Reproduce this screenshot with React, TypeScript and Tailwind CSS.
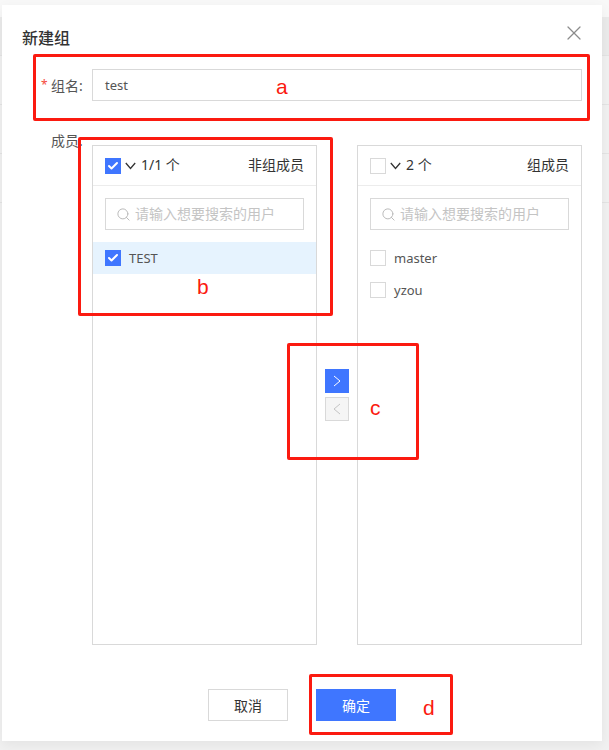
import { Check, Search, X } from "lucide-react";

const FONT = "font-['Noto_Sans','Noto_Sans_CJK_SC',sans-serif]";
const NOTE_TEXT = "absolute font-['Liberation_Sans',sans-serif] text-[21px] leading-none text-[#fb1a10]";
const NOTE_BOX = "absolute rounded-[2px] border-[3px] border-[#fb1a10]";

function Box({ checked = false }: { checked?: boolean }) {
  if (checked) {
    return (
      <span className="flex h-4 w-4 shrink-0 items-center justify-center bg-[#3f76ff]">
        <Check className="h-3 w-3 text-white" strokeWidth={4} />
      </span>
    );
  }
  return <span className="h-4 w-4 shrink-0 border border-[#d9d9d9] bg-white" />;
}

function Caret({ d, color }: { d: string; color: string }) {
  return (
    <svg width="12" height="12" viewBox="0 0 12 12" fill="none" stroke={color} strokeWidth="1">
      <path d={d} />
    </svg>
  );
}

function Panel({
  count,
  title,
  checked,
  users,
}: {
  count: string;
  title: string;
  checked: boolean;
  users: { name: string; selected: boolean }[];
}) {
  return (
    <div className="h-[500px] w-[225px] border border-[#d9d9d9] bg-white">
      <div className="flex h-10 items-center border-b border-[#ececec] px-3">
        <Box checked={checked} />
        <svg className="ml-[4px]" width="11" height="8" viewBox="0 0 11 8" fill="none" stroke="#333" strokeWidth="1.3">
          <path d="M0.8 1l4.7 5.4L10.2 1" />
        </svg>
        <span className="ml-[5px] pb-[2px] text-[14px] text-[#333]">{count}</span>
        <span className="ml-auto pb-[2px] text-[14px] text-[#333]">{title}</span>
      </div>
      <div className="px-3 pt-3">
        <div className="flex h-8 w-[199px] items-center border border-[#d9d9d9] pl-[10px]">
          <Search className="h-[15px] w-[15px] text-[#bbb]" strokeWidth={1.6} />
          <span className="ml-[4px] pb-[2px] text-[14px] text-[#c4c4c4]">请输入想要搜索的用户</span>
        </div>
      </div>
      <div className="mt-3">
        {users.map((user) => (
          <div
            key={user.name}
            className={`flex h-8 items-center gap-2 px-3 ${user.selected ? "bg-[#e6f3fe]" : ""}`}
          >
            <Box checked={user.selected} />
            <span className="pt-[2px] text-[13px] text-[#555]">{user.name}</span>
          </div>
        ))}
      </div>
    </div>
  );
}

export default function App() {
  return (
    <div className={`relative h-[750px] w-[609px] overflow-hidden bg-[#f1f1f1] ${FONT}`}>
      {/* page behind the dialog */}
      <div className="absolute inset-x-0 top-0">
        <div className="h-[17px] bg-[#f8f8f8]" />
        <div className="h-[39px] border-b border-[#e4e4e4] bg-[#ebebeb]" />
        <div className="h-[49px] border-b border-[#e4e4e4]" />
        <div className="h-[49px] border-b border-[#e4e4e4]" />
        <div className="h-[49px] border-b border-[#e4e4e4]" />
      </div>

      <div className="relative ml-[2px] mt-[5px] h-[736px] w-[600px] bg-white px-5 shadow-[0_4px_12px_rgba(0,0,0,0.06)]">
        <div className="flex h-[64px] items-start justify-between pt-[21px]">
          <h2 className="text-[16px] font-medium leading-6 text-[#333]">新建组</h2>
          <X className="-mr-[4px] -mt-[5px] h-6 w-6 text-[#8c8c8c]" strokeWidth={1.25} />
        </div>
        <div className="flex items-center">
          <div className="flex w-[70px] items-center pl-[19px] text-[14px] text-[#555]">
            <span className="mr-[3px] w-[7px] text-[12px] text-[#f5483b]">*</span>组名:
          </div>
          <div className="flex h-8 w-[490px] items-center border border-[#d9d9d9] px-3 pt-[2px] text-[13px] text-[#555]">
            test
          </div>
        </div>
        <div className="mt-[44px] flex items-start">
          <div className="-mt-[15px] w-[70px] pl-[29px] text-[14px] text-[#555]">成员:</div>
          <Panel
            count="1/1 个"
            title="非组成员"
            checked
            users={[{ name: "TEST", selected: true }]}
          />
          <div className="mt-[224px] flex w-10 flex-col items-center gap-1">
            <span className="flex h-6 w-6 items-center justify-center bg-[#3f76ff]">
              <Caret d="M3 1l6 5-6 5" color="#fff" />
            </span>
            <span className="flex h-6 w-6 items-center justify-center border border-[#d9d9d9] bg-[#f5f5f5]">
              <Caret d="M9 1L3 6l6 5" color="#c4c4c4" />
            </span>
          </div>
          <Panel
            count="2 个"
            title="组成员"
            checked={false}
            users={[
              { name: "master", selected: false },
              { name: "yzou", selected: false },
            ]}
          />
        </div>
        <div className="mt-[44px] flex justify-center gap-7">
          <button className="h-8 w-20 border border-[#d9d9d9] bg-white text-[14px] text-[#333]">取消</button>
          <button className="h-8 w-20 bg-[#3f76ff] text-[14px] text-white">确定</button>
        </div>
      </div>

      {/* red annotations drawn over the screenshot */}
      <div className={`${NOTE_BOX} left-[33px] top-[54px] h-[67px] w-[557px]`} />
      <span className={`${NOTE_TEXT} left-[276px] top-[76px]`}>a</span>
      <div className={`${NOTE_BOX} left-[78px] top-[137px] h-[179px] w-[255px]`} />
      <span className={`${NOTE_TEXT} left-[197px] top-[276px]`}>b</span>
      <div className={`${NOTE_BOX} left-[287px] top-[343px] h-[117px] w-[132px]`} />
      <span className={`${NOTE_TEXT} left-[370px] top-[397px]`}>c</span>
      <div className={`${NOTE_BOX} left-[309px] top-[674px] h-[61px] w-[144px]`} />
      <span className={`${NOTE_TEXT} left-[423px] top-[697px]`}>d</span>
    </div>
  );
}
